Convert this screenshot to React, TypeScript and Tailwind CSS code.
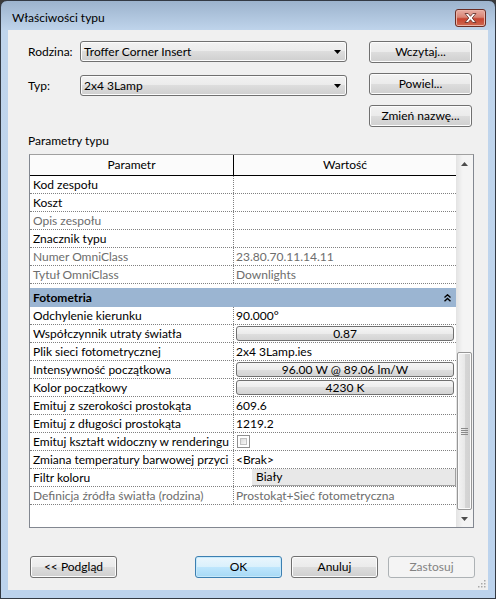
import type { ReactNode } from 'react';

type Kind = 'text' | 'button' | 'check' | 'color';

type Param = {
  name: string;
  value?: string;
  gray?: boolean;
  kind?: Kind;
};

const identity: Param[] = [
  { name: 'Kod zespołu' },
  { name: 'Koszt' },
  { name: 'Opis zespołu', gray: true },
  { name: 'Znacznik typu' },
  { name: 'Numer OmniClass', value: '23.80.70.11.14.11', gray: true },
  { name: 'Tytuł OmniClass', value: 'Downlights', gray: true },
];

const photometry: Param[] = [
  { name: 'Odchylenie kierunku', value: '90.000°' },
  { name: 'Współczynnik utraty światła', value: '0.87', kind: 'button' },
  { name: 'Plik sieci fotometrycznej', value: '2x4 3Lamp.ies' },
  { name: 'Intensywność początkowa', value: '96.00 W @ 89.06 lm/W', kind: 'button' },
  { name: 'Kolor początkowy', value: '4230 K', kind: 'button' },
  { name: 'Emituj z szerokości prostokąta', value: '609.6' },
  { name: 'Emituj z długości prostokąta', value: '1219.2' },
  { name: 'Emituj kształt widoczny w renderingu', kind: 'check' },
  { name: 'Zmiana temperatury barwowej przyci', value: '<Brak>' },
  { name: 'Filtr koloru', value: 'Biały', kind: 'color' },
  { name: 'Definicja źródła światła (rodzina)', value: 'Prostokąt+Sieć fotometryczna', gray: true },
];

function WinButton({ children, variant = 'normal', className = '' }: { children: ReactNode; variant?: 'normal' | 'default' | 'disabled'; className?: string }) {
  const look =
    variant === 'default'
      ? 'border-[#3c7fb1] bg-[linear-gradient(to_bottom,#eaf6fd_0%,#d9f0fc_50%,#bee6fd_50%,#a7d9f5_100%)] shadow-[inset_0_0_0_1px_#c6e9fb] text-black'
      : variant === 'disabled'
        ? 'border-[#adb2b5] bg-[#f4f4f4] text-[#838383]'
        : 'border-[#707070] bg-[linear-gradient(to_bottom,#f2f2f2_0%,#ebebeb_50%,#dddddd_50%,#cfcfcf_100%)] shadow-[inset_0_0_0_1px_#fcfcfc] text-black';
  return (
    <div className={`flex h-[22px] w-[87px] items-center justify-center rounded-[3px] border text-[12px] ${look} ${className}`}>
      {children}
    </div>
  );
}

function Combo({ value }: { value: string }) {
  return (
    <div className="flex h-[21px] w-[267px] items-center justify-between rounded-[3px] border border-[#707070] bg-[linear-gradient(to_bottom,#f2f2f2_0%,#ebebeb_50%,#dddddd_50%,#cfcfcf_100%)] pl-[3px] pr-[5px] shadow-[inset_0_0_0_1px_#fcfcfc]">
      <span className="text-[12px] text-black">{value}</span>
      <svg width="7" height="4" viewBox="0 0 7 4">
        <path d="M0 0h7L3.5 4z" fill="#000" />
      </svg>
    </div>
  );
}

function ValueCell({ p }: { p: Param }) {
  const color = p.gray ? 'text-[#6d6d6d]' : 'text-black';
  if (p.kind === 'button') {
    return (
      <div className="flex h-full items-center px-[2px]">
        <div className="flex h-[15px] w-full items-center justify-center rounded-[3px] border border-[#707070] bg-[linear-gradient(to_bottom,#f6f6f6_0%,#ececec_50%,#dfdfdf_50%,#d4d4d4_100%)] text-black">
          {p.value}
        </div>
      </div>
    );
  }
  if (p.kind === 'check') {
    return (
      <div className="flex h-full items-center pl-[3px]">
        <div className="h-[13px] w-[13px] border border-[#8f8f8f] bg-white p-[2px]">
          <div className="h-full w-full border border-[#c2c2c2] bg-[linear-gradient(to_bottom_right,#dcdcdc,#f8f8f8)]" />
        </div>
      </div>
    );
  }
  if (p.kind === 'color') {
    return (
      <div className="flex h-full">
        <div className="w-[18px] bg-white" />
        <div className="flex flex-1 items-center border-b border-r border-[#a0a0a0] bg-[#e8e8e8] pl-[4px] text-black">{p.value}</div>
      </div>
    );
  }
  return <div className={`flex h-full items-center pl-[2px] ${color}`}>{p.value}</div>;
}

function Row({ p }: { p: Param }) {
  return (
    <div className="flex h-[18px] border-b border-dotted border-[#808080] text-[12px]">
      <div
        className={`flex w-[204px] items-center overflow-hidden whitespace-nowrap border-r border-dotted border-[#808080] pl-[3px] ${p.gray ? 'text-[#6d6d6d]' : 'text-black'}`}
      >
        {p.name}
      </div>
      <div className="flex-1 overflow-hidden whitespace-nowrap">
        <ValueCell p={p} />
      </div>
    </div>
  );
}

function Scrollbar() {
  return (
    <div className="flex w-[17px] flex-col items-center bg-[linear-gradient(to_right,#e3e3e3,#f4f4f4_40%,#f4f4f4)]">
      <div className="flex h-[17px] w-full items-center justify-center">
        <svg width="7" height="4" viewBox="0 0 7 4">
          <path d="M3.5 0L7 4H0z" fill="#4d4d4d" />
        </svg>
      </div>
      <div className="flex-1" />
      <div className="flex h-[158px] w-[15px] items-center justify-center rounded-[2px] border border-[#979797] bg-[linear-gradient(to_right,#f3f3f3,#e8e8e8_50%,#d6d6d6_50%,#d0d0d0)] shadow-[inset_0_0_0_1px_#fbfbfb]">
        <svg width="7" height="7" viewBox="0 0 7 7">
          <path d="M0 0.5h7M0 2.5h7M0 4.5h7M0 6.5h7" stroke="#8a8a8a" strokeWidth="1" />
        </svg>
      </div>
      <div className="flex h-[17px] w-full items-center justify-center">
        <svg width="7" height="4" viewBox="0 0 7 4">
          <path d="M0 0h7L3.5 4z" fill="#4d4d4d" />
        </svg>
      </div>
    </div>
  );
}

export default function App() {
  return (
    <div className="h-[599px] w-[496px] bg-[#3a3a3a] font-['Lato',sans-serif]">
      <div className="flex h-[599px] w-[496px] flex-col overflow-hidden rounded-t-[7px] border border-[#333a44] bg-[linear-gradient(to_bottom,#9cb3cd_0px,#c0d5ec_30px,#bcd3ed_100%)]">
        {/* title bar */}
        <div className="flex h-[29px] items-center justify-between pl-[11px] pr-[9px] pt-[4px]">
          <span className="text-[12px] text-black">Właściwości typu</span>
          <div className="flex h-[18px] w-[31px] items-center justify-center rounded-[3px] border border-[#6b2d24] bg-[linear-gradient(to_bottom,#e8ada3_0%,#d98575_45%,#c6432f_55%,#cf6a52_100%)] shadow-[inset_0_0_0_1px_#eab4a8]">
            <svg width="13" height="10" viewBox="0 0 13 10">
              <path d="M1 0.5h3.2L6.5 3.3 8.8 0.5H12L8.2 5 12 9.5H8.8L6.5 6.7 4.2 9.5H1L4.8 5z" fill="#fff" stroke="#5a2a24" strokeWidth="0.8" />
            </svg>
          </div>
        </div>

        {/* client area */}
        <div className="relative mx-[7px] h-[560px] bg-[#f0f0f0] text-[12px] text-black">
          <div className="flex pt-[11px]">
            <div className="flex flex-col gap-[13px] pl-[20px]">
              <div className="flex items-center">
                <span className="w-[52px]">Rodzina:</span>
                <Combo value="Troffer Corner Insert" />
              </div>
              <div className="flex items-center">
                <span className="w-[52px]">Typ:</span>
                <Combo value="2x4 3Lamp" />
              </div>
            </div>
            <div className="ml-[22px] flex flex-col gap-[10px]">
              <WinButton className="w-[103px]">Wczytaj...</WinButton>
              <WinButton className="w-[103px]">Powiel...</WinButton>
              <WinButton className="w-[103px]">Zmień nazwę...</WinButton>
            </div>
          </div>

          <div className="mt-[6px] h-[16px] pl-[20px] leading-[16px]">Parametry typu</div>

          {/* parameter grid */}
          <div className="ml-[21px] mt-[5px] flex h-[374px] w-[445px] border border-[#828790] border-t-[#a0a0a0] bg-white">
            <div className="flex w-[426px] flex-col">
              <div className="flex h-[21px] border-b border-black bg-[#fbfbfb]">
                <div className="flex w-[204px] items-center justify-center border-r border-black">Parametr</div>
                <div className="flex flex-1 items-center justify-center">Wartość</div>
              </div>
              {identity.map((p) => (
                <Row key={p.name} p={p} />
              ))}
              <div className="h-[4px]" />
              <div className="flex h-[19px] items-center justify-between bg-[#9bb5d2] pl-[3px] pr-[5px]">
                <span className="font-bold">Fotometria</span>
                <svg width="7" height="8" viewBox="0 0 7 8">
                  <path d="M0.5 3.5L3.5 0.8 6.5 3.5M0.5 7.2L3.5 4.5 6.5 7.2" fill="none" stroke="#000" strokeWidth="1.4" />
                </svg>
              </div>
              {photometry.map((p) => (
                <Row key={p.name} p={p} />
              ))}
            </div>
            <Scrollbar />
          </div>

          {/* bottom buttons */}
          <div className="mt-[28px] flex pl-[22px]">
            <WinButton>&lt;&lt; Podgląd</WinButton>
            <WinButton variant="default" className="ml-[78px]">
              OK
            </WinButton>
            <WinButton className="ml-[9px]">Anuluj</WinButton>
            <WinButton variant="disabled" className="ml-[10px]">
              Zastosuj
            </WinButton>
          </div>

          <svg className="absolute bottom-[2px] right-[2px]" width="10" height="10" viewBox="0 0 10 10">
            <g fill="#a8a8a8">
              <rect x="8" y="2" width="1.5" height="1.5" />
              <rect x="5" y="5" width="1.5" height="1.5" />
              <rect x="8" y="5" width="1.5" height="1.5" />
              <rect x="2" y="8" width="1.5" height="1.5" />
              <rect x="5" y="8" width="1.5" height="1.5" />
              <rect x="8" y="8" width="1.5" height="1.5" />
            </g>
          </svg>
        </div>
      </div>
    </div>
  );
}
